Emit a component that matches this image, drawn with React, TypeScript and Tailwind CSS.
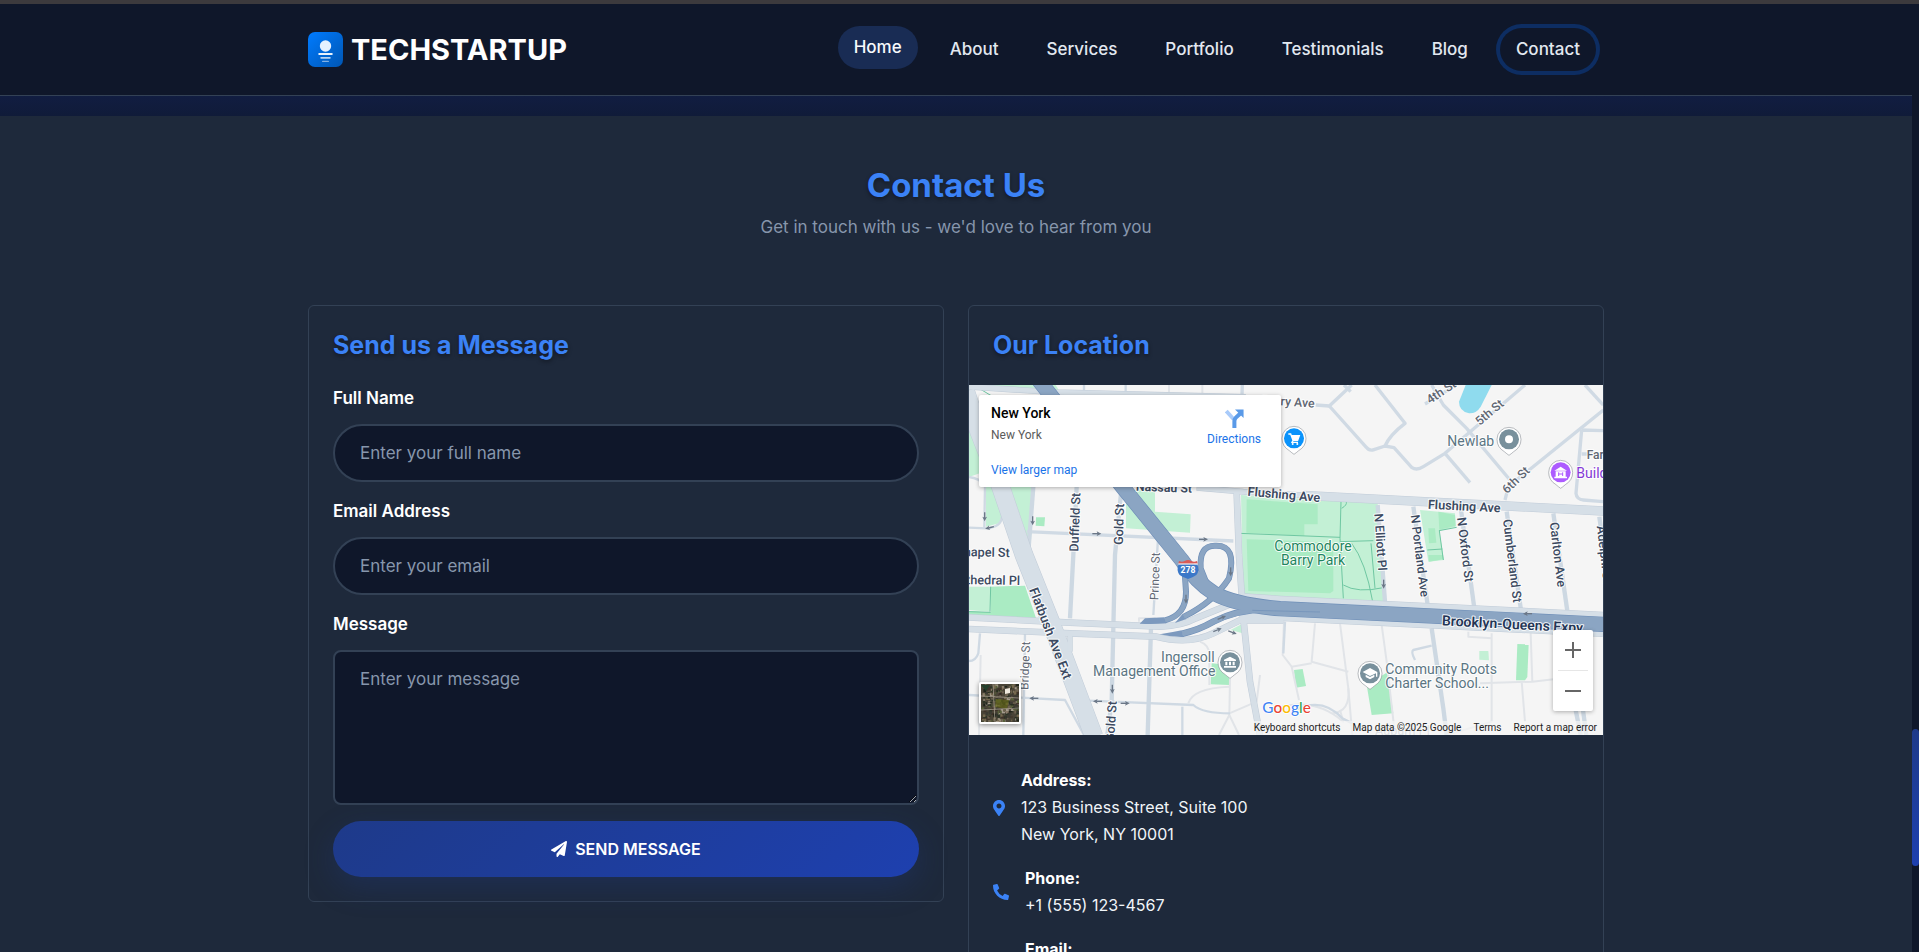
import React from "react";
import { FaMapMarkerAlt, FaPaperPlane, FaPhoneAlt, FaEnvelope } from "react-icons/fa";

const navLinks = [
  { label: "Home", state: "active" },
  { label: "About", state: "idle" },
  { label: "Services", state: "idle" },
  { label: "Portfolio", state: "idle" },
  { label: "Testimonials", state: "idle" },
  { label: "Blog", state: "idle" },
  { label: "Contact", state: "focused" },
];

const linkStyles: Record<string, string> = {
  active: "-translate-y-0.5 bg-[#192c54] text-[#f8fafc]",
  idle: "text-[#e2e8f0]",
  focused: "text-[#e2e8f0] ring-4 ring-[#0d2d62]",
};

function LogoMark() {
  return (
    <svg viewBox="0 0 35 35" className="size-[35px] shrink-0" aria-hidden="true">
      <defs>
        <linearGradient id="logo-fill" x1="0" y1="0" x2="1" y2="1">
          <stop offset="0" stopColor="#007bff" />
          <stop offset="1" stopColor="#0056b3" />
        </linearGradient>
      </defs>
      <rect width="35" height="35" rx="7" fill="url(#logo-fill)" />
      <circle cx="17.5" cy="14" r="5.7" fill="#e6f1ff" />
      <rect x="10.3" y="21" width="14.4" height="2" rx="0.8" fill="#fff" fillOpacity="0.92" />
      <rect x="12.3" y="25" width="10.4" height="1.8" rx="0.8" fill="#fff" fillOpacity="0.72" />
      <rect x="14" y="28.7" width="7" height="1.4" rx="0.7" fill="#fff" fillOpacity="0.5" />
    </svg>
  );
}

function Header() {
  return (
    <header className="border-b border-[#334155] bg-[#0f172a]">
      <div className="mx-auto flex h-[91px] max-w-[1320px] items-center justify-between px-3">
        <a href="#home" className="flex items-center gap-2">
          <LogoMark />
          <span className="text-[29px] leading-[43px] font-bold text-white">TECHSTARTUP</span>
        </a>
        <nav className="flex items-center gap-4 pr-2">
          {navLinks.map((link) => (
            <a
              key={link.label}
              href={`#${link.label.toLowerCase()}`}
              className={`rounded-[25px] px-4 py-2 text-[17px] leading-[27px] font-medium ${linkStyles[link.state]}`}
            >
              {link.label}
            </a>
          ))}
        </nav>
      </div>
    </header>
  );
}

const thinRoads = [
  "M48 300 L46 428 M0 428 L53 430 Q98 425 98 395",
  "M0 276 Q30 280 48 300",
  "M0 930 L288 945 L345 1050",
  "M168 745 L163 1050",
  "M33 745 L28 805 Q20 828 0 828",
  "M358 947 L673 960 Q700 985 783 985",
  "M640 965 L640 1050",
  "M568 445 L553 690",
  "M345 0 L345 30 M470 0 L470 30",
  "M948 710 L943 805",
  "M1388 782 L1333 795 Q1325 800 1338 825",
  "M980 975 Q1060 935 1120 1000 L1150 1015",
];

const grayRoads = [
  "M693 770 Q721 780 721 810 L721 900",
  "M783 880 L781 990 L750 1050 M781 990 L810 1050",
  "M658 955 Q670 910 780 905",
  "M781 985 L863 950 L873 870",
  "M510 710 L510 700 L560 700",
  "M945 710 L941 810 L968 845 L1028 835",
  "M1038 715 L1028 830 L1138 860",
  "M1113 715 L1138 910 L1150 1050",
  "M1238 720 L1253 830 L1278 1050",
  "M968 845 L990 945",
  "M940 965 Q1043 940 1123 1010 L1113 975",
  "M1138 910 Q1145 980 1090 985",
  "M1568 745 L1568 1010 L1400 1060 M1498 740 L1498 755 L1568 760",
  "M1685 745 L1690 890 L1533 895 M1690 890 L1760 882 M1658 890 L1668 1010",
  "M35 810 L30 1050",
  "M600 0 L600 30 M700 0 L700 30",
];

const localRoads = [
  "M1040 60 L1081 63 L1148 0",
  "M1125 0 L1145 20",
  "M1081 63 L1192 187 Q1201 199 1215 194 L1248 183 L1275 188 L1328 247 Q1343 258 1363 245 L1428 205 L1668 0",
  "M1248 183 Q1262 150 1308 115 L1218 0",
  "M1388 0 L1423 60 L1493 130 L1623 285",
  "M1368 57 L1453 5",
  "M1428 205 L1503 293",
  "M1608 345 L1618 305 L1903 75",
  "M1848 0 L1903 60",
  "M1838 135 L1903 137 M1838 135 L1821 325 Q1823 343 1843 345 L1903 350 M1838 207 L1903 207",
  "M820 0 L818 60",
  "M173 440 L793 468",
];

const avenues = [
  "M323 305 L313 510 L303 700",
  "M458 305 L438 510 L428 950 L415 1050",
  "M546 730 L536 1050",
  "M193 305 L178 500",
  "M1226 360 L1248 650",
  "M1333 365 L1376 660",
  "M1476 375 L1516 670",
  "M1613 380 L1656 675",
  "M1753 385 L1796 685",
  "M1891 395 L1905 500",
  "M1388 730 L1423 970 L1433 1050",
  "M1820 975 L1835 1050 M1842 975 L1852 1050",
];

const arterials = [
  { d: "M-10 20 L30 140 L95 305 L165 510 L245 710 L375 1055", w: 56 },
  { d: "M0 697 L303 713 L573 725 Q640 722 680 700 L790 655", w: 20 },
  { d: "M0 732 L303 745 L563 755 Q660 780 733 745 L813 706 L943 706", w: 20 },
  { d: "M303 745 L303 800", w: 16 },
  { d: "M803 320 L810 510 L823 700 L843 890 L873 1050", w: 20 },
  { d: "M0 5 L260 22 L830 36", w: 18 },
  { d: "M683 308 L823 320 L1023 332", w: 18 },
  { d: "M1003 331 L1903 378", w: 28 },
  { d: "M813 662 L933 670 L1903 718", w: 76 },
];

const motorways = [
  { d: "M640 746 Q690 735 733 710 Q800 675 893 672", w: 20 },
  { d: "M588 706 Q652 690 651 620 L646 545", w: 18 },
  { d: "M645 695 Q735 650 780 580 Q805 480 740 482 Q690 480 695 550 L715 600", w: 18 },
  { d: "M205 -20 L460 305 L638 525 Q680 590 735 625 Q800 660 933 671 L1903 718", w: 46 },
];

// Pointed ends where the ramps leave the surface streets.
const rampTips = [
  "M572 748 Q610 742 638 736 L643 756 Q610 757 572 748Z",
  "M512 716 L528 700 L586 697 L592 715 Q550 719 512 716Z",
  "M618 714 L641 686 L650 703Z",
];

type Label = {
  t: string;
  x: number;
  y: number;
  r?: number;
  s?: number;
  w?: number;
  c?: string;
  a?: "start" | "middle" | "end";
};

const poi = "#5b7583";
const street = "#3c4a61";
const minor = "#5f6672";

const labels: Label[] = [
  { t: "Nassau St", x: 500, y: 317, r: 2, s: 37, w: 600 },
  { t: "Flushing Ave", x: 835, y: 332, r: 5, s: 38, w: 600 },
  { t: "Flushing Ave", x: 1376, y: 371, r: 3, s: 38, w: 600 },
  { t: "Duffield St", x: 328, y: 500, r: -88, s: 38, w: 500 },
  { t: "Gold St", x: 461, y: 480, r: -88, s: 38, w: 500 },
  { t: "Prince St", x: 568, y: 646, r: -88, s: 36, c: minor },
  { t: "Chapel St", x: 122, y: 516, r: 1, s: 38, w: 500, a: "end" },
  { t: "Cathedral Pl", x: 153, y: 600, r: 1, s: 38, w: 500, a: "end" },
  { t: "Flatbush Ave Ext", x: 180, y: 614, r: 69, s: 39, w: 600 },
  { t: "Bridge St", x: 178, y: 915, r: -88, s: 36, c: minor },
  { t: "Gold St", x: 435, y: 1072, r: -86, s: 38, w: 500 },
  { t: "N Elliott Pl", x: 1216, y: 386, r: 86, s: 37, w: 500 },
  { t: "N Portland Ave", x: 1325, y: 391, r: 83, s: 37, w: 500 },
  { t: "N Oxford St", x: 1464, y: 398, r: 83, s: 38, w: 500 },
  { t: "Cumberland St", x: 1602, y: 404, r: 83, s: 38, w: 500 },
  { t: "Carlton Ave", x: 1742, y: 413, r: 83, s: 38, w: 500 },
  { t: "Adelphi St", x: 1883, y: 424, r: 83, s: 38, w: 500 },
  { t: "Perry Ave", x: 1036, y: 68, r: 4, s: 37, c: minor, w: 500, a: "end" },
  { t: "4th St", x: 1383, y: 58, r: -34, s: 37, c: minor, w: 500 },
  { t: "5th St", x: 1532, y: 123, r: -40, s: 37, c: minor, w: 500 },
  { t: "6th St", x: 1614, y: 328, r: -44, s: 37, c: minor, w: 500 },
  { t: "Newlab", x: 1435, y: 184, s: 42, c: poi },
  { t: "Commodore", x: 1032, y: 498, s: 42, c: "#1f8560", a: "middle" },
  { t: "Barry Park", x: 1032, y: 539, s: 42, c: "#1f8560", a: "middle" },
  { t: "Ingersoll", x: 737, y: 832, s: 42, c: poi, a: "end" },
  { t: "Management Office", x: 739, y: 873, s: 42, c: poi, a: "end" },
  { t: "Community Roots", x: 1249, y: 867, s: 42, c: poi },
  { t: "Charter School...", x: 1249, y: 909, s: 42, c: poi },
  { t: "Brooklyn-Queens Expy", x: 1418, y: 721, r: 3, s: 42, w: 600, c: "#243656" },
  { t: "Farragut", x: 1853, y: 222, s: 36, c: minor, w: 500 },
  { t: "Building 92", x: 1822, y: 280, s: 42, c: "#8438d6" },
  { t: "Auburn Pl", x: 1218, y: 1050, s: 38, c: "#a8b0bb" },
];

const arrows = [
  { x: 47, y: 395, r: 90 },
  { x: 62, y: 428, r: 165 },
  { x: 191, y: 407, r: 90 },
  { x: 383, y: 446, r: 0 },
  { x: 703, y: 463, r: 0 },
  { x: 785, y: 560, r: 90 },
  { x: 651, y: 642, r: 90 },
  { x: 758, y: 698, r: -22 },
  { x: 745, y: 735, r: -22 },
  { x: 790, y: 742, r: 20 },
  { x: 430, y: 912, r: 90 },
  { x: 386, y: 949, r: 180 },
  { x: 468, y: 955, r: 0 },
  { x: 195, y: 940, r: 180 },
  { x: 1244, y: 597, r: 90 },
  { x: 1676, y: 686, r: 180 },
];

function Pin({ x, y, color, children }: { x: number; y: number; color: string; children: React.ReactNode }) {
  return (
    <g transform={`translate(${x} ${y})`}>
      <path
        d="M0 48 Q-6 44 -14 37 Q-36 24 -36 0 A36 36 0 0 1 36 0 Q36 24 14 37 Q6 44 0 48Z"
        fill="#fff"
        stroke="#8a9096"
        strokeOpacity="0.6"
        strokeWidth="3"
      />
      <circle r="30" fill={color} />
      {children}
    </g>
  );
}

function StreetMap() {
  return (
    <svg
      viewBox="0 0 1902 1050"
      preserveAspectRatio="xMidYMid slice"
      className="block size-full"
      role="img"
      aria-label="Street map"
      fontFamily="Roboto, sans-serif"
    >
      <rect width="1902" height="1050" fill="#f5f5f5" />

      <g fill="#c3f0d5">
        <path d="M0 10 L20 60 L60 180 L45 260 L0 276Z" />
        <path d="M0 0 L260 0 L275 25 L0 12Z" />
        <path d="M51 305 L75 305 L100 390 L90 415 L51 425Z" />
        <path d="M123 305 L193 305 L185 485Z" />
        <path d="M471 315 L558 315 L558 380 L665 388 L663 443 L471 430Z" />
        <path d="M816 330 L1226 355 L1246 650 L822 632Z" />
        <path d="M1353 375 L1458 385 L1460 425 L1411 437 L1425 525 L1378 530Z" />
        <path d="M785 735 L823 715 L821 745Z" />
        <path d="M1531 798 L1558 798 L1560 826 L1531 824Z" />
        <path d="M0 605 L65 605 L63 680 L0 675Z" />
      </g>
      <g fill="#aaebc3">
        <path d="M201 397 L228 397 L226 424 L200 422Z" />
        <path d="M833 343 L1046 358 L1046 418 L1006 418 L1006 452 L832 443Z" />
        <path d="M833 463 L1000 468 L1093 478 L1093 618 L1083 625 L838 618Z" />
        <path d="M1408 380 L1458 390 L1460 423 L1411 434Z" />
        <path d="M1378 430 L1398 430 L1402 473 L1380 475Z" />
        <path d="M1378 510 L1422 510 L1423 523 L1380 530Z" />
        <path d="M65 605 L168 602 L203 705 L0 692 L0 678 L65 682Z" />
        <path d="M728 835 L783 840 L781 900 L725 898Z" />
        <path d="M975 855 L1001 852 L1011 903 L981 908Z" />
        <path d="M1645 777 L1679 778 L1675 876 L1668 886 L1641 886Z" />
        <path d="M1193 900 L1255 862 L1273 985 L1208 990Z" />
      </g>
      <path d="M1490 0 H1568 L1535 65 Q1522 86 1500 85 Q1470 78 1470 50 Z" fill="#8fdbee" />

      <g fill="none" stroke="#6fc7a2" strokeWidth="3">
        <path d="M811 445 L1113 457 M1116 350 L1113 460 L1123 640 M1113 470 L1213 467" />
        <path d="M1118 370 Q1135 360 1132 350 M1148 475 Q1190 530 1211 650 M1206 475 L1218 610 M1123 600 Q1165 625 1243 608" />
        <path d="M1410 437 L1463 427 M1411 437 L1423 525 M1375 495 L1420 492 M65 605 L63 680 M0 680 L65 682" />
        <path d="M0 20 L60 90 M30 10 L80 40" />
      </g>

      <g fill="none" strokeLinejoin="round">
        {grayRoads.map((d) => (
          <path key={d} d={d} stroke="#e1e4e8" strokeWidth="6" />
        ))}
        {thinRoads.map((d) => (
          <path key={d} d={d} stroke="#cfd9e3" strokeWidth="7" />
        ))}
        {localRoads.map((d) => (
          <path key={d} d={d} stroke="#d0dae4" strokeWidth="10" />
        ))}
        {avenues.map((d) => (
          <path key={d} d={d} stroke="#cdd8e2" strokeWidth="13" />
        ))}
        {arterials.map((r) => (
          <path key={r.d} d={r.d} stroke="#c1ccd8" strokeWidth={r.w} />
        ))}
        {arterials.map((r) => (
          <path key={r.d} d={r.d} stroke="#d6dfe7" strokeWidth={r.w - 3} />
        ))}
        {rampTips.map((d) => (
          <path key={d} d={d} fill="#7c99be" />
        ))}
        {motorways.map((r) => (
          <path key={r.d} d={r.d} stroke="#6f8fb8" strokeWidth={r.w} />
        ))}
        {motorways.map((r) => (
          <path key={r.d} d={r.d} stroke="#8ba5c3" strokeWidth={r.w - 4} />
        ))}
        <path d="M850 676 L1053 681" stroke="#6f8fb8" strokeWidth="2" />
      </g>

      {arrows.map((a) => (
        <g key={`${a.x}-${a.y}`} transform={`translate(${a.x} ${a.y}) rotate(${a.r})`}>
          <path d="M-13 0 H4" stroke="#6b7787" strokeWidth="4" />
          <path d="M14 0 L0 -7 L3 0 L0 7Z" fill="#6b7787" />
        </g>
      ))}

      {labels.map((l) => (
        <text
          key={`${l.t}-${l.x}`}
          transform={`translate(${l.x} ${l.y}) rotate(${l.r ?? 0})`}
          fontSize={l.s}
          fontWeight={l.w ?? 400}
          fill={l.c ?? street}
          textAnchor={l.a ?? "start"}
          stroke="#fff"
          strokeOpacity="0.9"
          strokeWidth="6"
          strokeLinejoin="round"
          paintOrder="stroke"
        >
          {l.t}
        </text>
      ))}

      <g transform="translate(657 552)">
        <path d="M-28 -14 Q-36 4 -25 18 Q-14 26 0 30 Q14 26 25 18 Q36 4 28 -14Z" fill="#3b78c8" />
        <path d="M-27 -24 Q-18 -19 -10 -24 Q0 -30 10 -24 Q18 -19 27 -24 L29 -16 H-29Z" fill="#d95b57" />
        <path d="M-29 -15 H29" stroke="#fff" strokeWidth="3" />
        <text y="12" fontSize="26" fontWeight="700" fill="#fff" textAnchor="middle">278</text>
      </g>

      <Pin x={975} y={160} color="#0a93fb">
        <path d="M-17 -13 H-10 L-3 6 H11 L16 -8 H-8 M-3 6 L-6 12 H12" fill="none" stroke="#fff" strokeWidth="4" />
        <path d="M-8 -8 H16 L11 6 H-3Z" fill="#fff" />
        <circle cx="-4" cy="17" r="3" fill="#fff" />
        <circle cx="10" cy="17" r="3" fill="#fff" />
      </Pin>
      <Pin x={1620} y={163} color="#78909c">
        <circle r="12" fill="#fff" />
      </Pin>
      <Pin x={1775} y={262} color="#ad5cff">
        <path d="M-19 -5 L0 -17 L19 -5Z M-15 -3 H15 V14 H-15Z M-19 13 H19 V18 H-19Z" fill="#fff" />
        <path d="M-6 0 V11 M6 0 V11 M-6 5 H6" stroke="#ad5cff" strokeWidth="3" />
      </Pin>
      <Pin x={783} y={832} color="#78909c">
        <path d="M-18 -8 L0 -17 L18 -8 V-4 H-18Z M-14 -2 H-8 V9 H-14Z M-3 -2 H3 V9 H-3Z M8 -2 H14 V9 H8Z M-18 11 H18 V16 H-18Z" fill="#fff" />
      </Pin>
      <Pin x={1203} y={865} color="#78909c">
        <path d="M-22 -4 L0 -16 L22 -4 V10 H18 V0 L0 8Z M-13 4 L0 11 L13 4 V11 L0 18 L-13 11Z" fill="#fff" />
      </Pin>

      <text x="880" y="983" fontSize="46" fontFamily="Lato, sans-serif" fontWeight="500" stroke="#fff" strokeWidth="5" paintOrder="stroke">
        <tspan fill="#4285f4">G</tspan>
        <tspan fill="#ea4335">o</tspan>
        <tspan fill="#fbbc04">o</tspan>
        <tspan fill="#4285f4">g</tspan>
        <tspan fill="#34a853">l</tspan>
        <tspan fill="#ea4335">e</tspan>
      </text>
    </svg>
  );
}

const aerialTones = ["#3c3a33", "#6d6250", "#2c3426", "#8a7c69", "#4b4d38", "#1f241b", "#a59b8c", "#57603a", "#3f3329", "#75694f", "#28301f"];

function AerialThumb() {
  let seed = 41;
  const next = () => {
    seed = (seed * 1103515245 + 12345) % 2147483648;
    return seed / 2147483648;
  };
  const cells = Array.from({ length: 260 }, (_, i) => ({
    id: i,
    x: next() * 37,
    y: next() * 37,
    w: 1 + next() * 3,
    h: 1 + next() * 2.5,
    tone: aerialTones[Math.floor(next() * aerialTones.length)],
  }));
  return (
    <svg viewBox="0 0 38 38" className="block size-[38px]" aria-hidden="true">
      <rect width="38" height="38" fill="#4a4437" />
      {cells.map((c) => (
        <rect key={c.id} x={c.x} y={c.y} width={c.w} height={c.h} fill={c.tone} />
      ))}
      <path d="M15 15 L28 16 L26 25 L14 23Z" fill="#62661a" opacity="0.7" />
      <path d="M24 5 L29 4 L29 9 L24 10Z" fill="#eee8dc" />
      <path d="M0 1 L9 1 L5 7Z" fill="#24402c" />
      <path d="M0 26 L38 24 M12 0 L14 38 M0 12 L38 14" stroke="#a39b8c" strokeWidth="0.8" />
    </svg>
  );
}

function MapPanel() {
  return (
    <div className="relative h-[350px] overflow-hidden bg-[#f5f5f5] [font-family:Roboto,sans-serif]">
      <StreetMap />

      <div className="absolute top-2.5 left-2.5 flex h-[92px] w-[302px] justify-between rounded-xs bg-white pt-[9px] pr-5 pl-3 shadow-[0_1px_4px_rgba(0,0,0,0.3)]">
        <div className="flex flex-col">
          <span className="text-[14px] leading-[18px] font-medium text-black">New York</span>
          <span className="mt-1 text-[12px] leading-[18px] text-[#5b5b5b]">New York</span>
          <a href="#map" className="mt-[17px] text-[12px] leading-[18px] text-[#1a73e8]">
            View larger map
          </a>
        </div>
        <a href="#directions" className="flex flex-col items-center pt-[5px] text-[12px] leading-[18px] text-[#1a73e8]">
          <svg viewBox="0 0 18 18" className="mb-0.5 size-[19px]" aria-hidden="true">
            <path d="M1.2 2 L8 9.5" stroke="#a9cbfa" strokeWidth="3.6" fill="none" />
            <path d="M8.9 18 V11.5 Q8.9 9.6 10.3 8.2 L14.5 4.2" stroke="#5a9ae8" strokeWidth="3.8" fill="none" />
            <path d="M9.5 0.5 H17.6 V8.6Z" fill="#5a9ae8" />
          </svg>
          Directions
        </a>
      </div>

      <button
        type="button"
        aria-label="Show satellite imagery"
        className="absolute bottom-[11px] left-2.5 rounded-xs border-2 border-white shadow-[0_1px_5px_rgba(0,0,0,0.45)]"
      >
        <AerialThumb />
      </button>

      <div className="absolute right-2.5 bottom-6 flex w-10 flex-col items-center rounded-xs bg-white shadow-[0_1px_4px_rgba(0,0,0,0.3)]">
        <button type="button" aria-label="Zoom in" className="flex size-10 items-center justify-center">
          <svg viewBox="0 0 18 18" className="size-[18px]" aria-hidden="true">
            <path d="M1 9 H17 M9 1 V17" stroke="#666" strokeWidth="2" />
          </svg>
        </button>
        <span className="h-px w-[30px] bg-[#e6e6e6]" />
        <button type="button" aria-label="Zoom out" className="flex size-10 items-center justify-center">
          <svg viewBox="0 0 18 18" className="size-[18px]" aria-hidden="true">
            <path d="M1 9 H17" stroke="#666" strokeWidth="2" />
          </svg>
        </button>
      </div>

      <div className="absolute right-0 bottom-0 flex h-[14px] items-center gap-3 bg-[#f5f5f5]/70 pr-[6px] pl-[5px] text-[10px] leading-[14px] whitespace-nowrap text-[#222]">
        <button type="button">Keyboard shortcuts</button>
        <span>Map data ©2025 Google</span>
        <a href="#terms">Terms</a>
        <a href="#report">Report a map error</a>
      </div>
    </div>
  );
}

const cardClass = "rounded-md border border-[#334155] bg-[#1e293b]";
const cardTitle = "text-[25px] leading-[31px] font-bold text-[#3b82f6] [text-shadow:0_2px_4px_rgba(0,0,0,0.4)]";
const labelClass = "block text-[17px] leading-[27px] font-semibold text-white";
const fieldClass =
  "mt-3 block w-full border-2 border-[#334155] bg-[#0f172a] px-[25px] text-[17px] text-white outline-none placeholder:text-[#8796ac]";

function ContactForm() {
  return (
    <form className={`${cardClass} p-6`} onSubmit={(e) => e.preventDefault()}>
      <h3 className={cardTitle}>Send us a Message</h3>
      <div className="mt-6 flex flex-col gap-4">
        <div>
          <label htmlFor="name" className={labelClass}>Full Name</label>
          <input id="name" type="text" placeholder="Enter your full name" className={`${fieldClass} h-[58px] rounded-full`} />
        </div>
        <div>
          <label htmlFor="email" className={labelClass}>Email Address</label>
          <input id="email" type="email" placeholder="Enter your email" className={`${fieldClass} h-[58px] rounded-full`} />
        </div>
        <div>
          <label htmlFor="message" className={labelClass}>Message</label>
          <textarea
            id="message"
            placeholder="Enter your message"
            className={`${fieldClass} h-[155px] resize-y rounded-lg py-[15px] leading-6`}
          />
        </div>
        <button
          type="submit"
          className="flex h-14 w-full items-center justify-center gap-2 rounded-full bg-[linear-gradient(135deg,#1e3a8a,#1e40af)] text-[16px] leading-6 font-semibold text-white shadow-[0_10px_30px_rgba(30,58,138,0.3)]"
        >
          <FaPaperPlane className="size-4" aria-hidden="true" />
          SEND MESSAGE
        </button>
      </div>
    </form>
  );
}

const details = [
  { icon: <FaMapMarkerAlt className="h-4 w-3" />, title: "Address:", lines: ["123 Business Street, Suite 100", "New York, NY 10001"] },
  { icon: <FaPhoneAlt className="size-4" />, title: "Phone:", lines: ["+1 (555) 123-4567"] },
  { icon: <FaEnvelope className="size-4" />, title: "Email:", lines: ["info@techstartup.com"] },
];

function LocationCard() {
  return (
    <section className={cardClass}>
      <h3 className={`${cardTitle} px-6 py-6`}>Our Location</h3>
      <MapPanel />
      <ul className="flex flex-col gap-[17px] px-6 pt-8 pb-6 text-[16px] leading-[27px] text-[#f1f5f9]">
        {details.map((d) => (
          <li key={d.title} className="flex items-center gap-4">
            <span className="text-[#3b82f6]">{d.icon}</span>
            <div>
              <strong className="font-bold text-white">{d.title}</strong>
              {d.lines.map((line) => (
                <p key={line}>{line}</p>
              ))}
            </div>
          </li>
        ))}
      </ul>
    </section>
  );
}

export default function App() {
  return (
    <div className="flex h-screen flex-col overflow-hidden bg-[#0f172a] [font-family:Inter,sans-serif]">
      <div className="h-1 shrink-0 bg-[#3c3a3d]" />
      <div className="flex min-h-0 flex-1">
        <main className="min-w-0 flex-1 overflow-hidden">
          <Header />
          <div className="h-5 bg-linear-to-b from-[#111d41] to-[#101b39]" />
          <section className="bg-[#1e293b] pt-12 pb-20">
            <div className="mx-auto max-w-[1320px] px-3">
              <div className="text-center">
                <h2 className="text-[33px] leading-[42px] font-bold text-[#3b82f6] [text-shadow:0_2px_4px_rgba(0,0,0,0.4)]">
                  Contact Us
                </h2>
                <p className="mt-2 text-[17px] leading-[27px] text-[#8796ac]">
                  Get in touch with us - we'd love to hear from you
                </p>
              </div>
              <div className="mt-16 grid grid-cols-2 items-start gap-6">
                <ContactForm />
                <LocationCard />
              </div>
            </div>
          </section>
        </main>
        <div className="flex w-[7px] shrink-0 flex-col bg-[#0f172a]" aria-hidden="true">
          <div className="grow-[725]" />
          <div className="h-[137px] rounded-full bg-[linear-gradient(180deg,#1e3a8a,#1e40af)]" />
          <div className="grow-[86]" />
        </div>
      </div>
    </div>
  );
}
